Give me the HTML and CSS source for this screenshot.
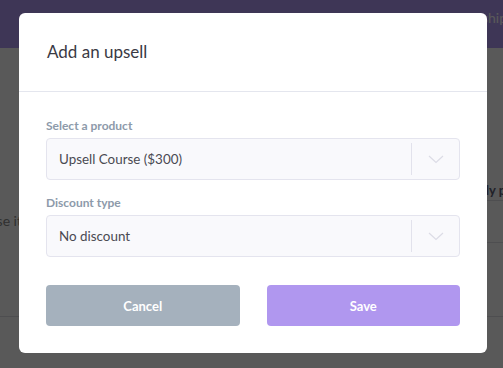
FILE: index.html
```html
<!DOCTYPE html>
<html lang="en">

<head>
    <meta charset="UTF-8">
    <meta name="viewport" content="width=device-width, initial-scale=1.0">
    <title>Add an upsell</title>
    <link rel="stylesheet" href="styles.css">
</head>

<body>
    <!-- Page behind the dialog -->
    <div class="page">
        <nav class="topnav">
            <a href="#">Dashboard</a>
            <a href="#">Sites</a>
            <a href="#">Courses</a>
            <a href="#">Products</a>
            <a href="#">Memberships</a>
        </nav>
        <div class="content">
            <div class="col-left">
                <p>Purchase it</p>
            </div>
            <div class="col-mid"></div>
            <div class="col-right">
                <div class="cell cell-head">Only purchased</div>
                <div class="cell">Yes</div>
                <div class="cell cell-tall">No</div>
            </div>
        </div>
    </div>

    <!-- Dialog -->
    <div class="overlay">
        <div class="modal">
            <div class="modal-header">
                <h2>Add an upsell</h2>
            </div>
            <div class="modal-body">
                <div class="field">
                    <label>Select a product</label>
                    <div class="select">
                        <span class="select-value">Upsell Course ($300)</span>
                        <span class="select-arrow">
                            <svg width="16" height="9" viewBox="0 0 16 9"><polyline points="1,1 8,7.5 15,1" fill="none" stroke="#dcdce6" stroke-width="1.2"/></svg>
                        </span>
                    </div>
                </div>
                <div class="field">
                    <label>Discount type</label>
                    <div class="select">
                        <span class="select-value">No discount</span>
                        <span class="select-arrow">
                            <svg width="16" height="9" viewBox="0 0 16 9"><polyline points="1,1 8,7.5 15,1" fill="none" stroke="#dcdce6" stroke-width="1.2"/></svg>
                        </span>
                    </div>
                </div>
                <div class="actions">
                    <button class="btn btn-cancel">Cancel</button>
                    <button class="btn btn-save">Save</button>
                </div>
            </div>
        </div>
    </div>
</body>

</html>
```

FILE: styles.css
```css
/* Basic page */
body {
    font-family: 'Lato', 'Noto Sans', sans-serif;
    margin: 0;
    padding: 0;
    background-color: #ffffff;
    overflow: hidden;
}

/* The page behind the dialog */
.page {
    height: 368px;
}

.topnav {
    background-color: #b29af6;
    height: 48px;
    box-sizing: border-box;
    padding: 8px 0 0 110px;
    display: flex;
    gap: 30px;
}

.topnav a {
    color: white;
    text-decoration: none;
    font-size: 14px;
    line-height: 20px;
}

.content {
    display: flex;
    height: 269px;
    box-sizing: border-box;
    border-bottom: 1px solid #e0e0e4;
}

.col-left {
    width: 22px;
    display: flex;
    justify-content: flex-end;
}

.col-left p {
    margin: 165px 0 0;
    font-size: 14px;
    line-height: 16px;
    color: #8a8a8a;
    white-space: nowrap;
}

.col-mid {
    flex: 1;
}

.col-right {
    width: 50px;
    padding-top: 122px;
    overflow: hidden;
}

.cell {
    height: 41px;
    border-bottom: 1px solid #e0e0e4;
    font-size: 13px;
    white-space: nowrap;
    color: #999;
    padding-left: 15px;
}

.cell-head {
    height: 30px;
    line-height: 40px;
    font-weight: bold;
    color: #5c6076;
}

.cell-tall {
    height: 72px;
    border-bottom: none;
}

/* Dim layer and dialog */
.overlay {
    position: fixed;
    inset: 0;
    background-color: rgba(0, 0, 0, 0.65);
}

.modal {
    position: absolute;
    left: 19px;
    top: 13px;
    width: 468px;
    background-color: white;
    border-radius: 6px;
}

.modal-header {
    height: 79px;
    box-sizing: border-box;
    border-bottom: 1px solid #e4e6ee;
    padding: 28px 28px 0;
}

.modal-header h2 {
    margin: 0;
    font-size: 17px;
    font-weight: normal;
    line-height: 22px;
    color: #3a3a44;
}

.modal-body {
    padding: 26px 27px 27px;
}

.field {
    margin-bottom: 15px;
}

.field label {
    display: block;
    font-size: 12px;
    font-weight: bold;
    line-height: 16px;
    color: #8d9aaa;
    margin-bottom: 4px;
}

/* The select boxes */
.select {
    height: 42px;
    box-sizing: border-box;
    background-color: #f9f9fc;
    border: 1px solid #e4e4ee;
    border-radius: 4px;
    display: flex;
    align-items: center;
}

.select-value {
    flex: 1;
    padding-left: 12px;
    font-size: 13.4px;
    color: #4a4a52;
}

.select-arrow {
    width: 47px;
    height: 32px;
    border-left: 1px solid #e2e2ec;
    display: flex;
    align-items: center;
    justify-content: center;
}

/* The buttons */
.actions {
    display: grid;
    grid-template-columns: 1fr 1fr;
    gap: 27px;
    margin-top: 28px;
}

.btn {
    height: 41px;
    border: none;
    border-radius: 4px;
    color: white;
    font-family: 'Lato', 'Noto Sans', sans-serif;
    font-size: 13px;
    font-weight: bold;
}

.btn-cancel {
    background-color: #a5b1bd;
}

.btn-save {
    background-color: #b097ef;
}
```
